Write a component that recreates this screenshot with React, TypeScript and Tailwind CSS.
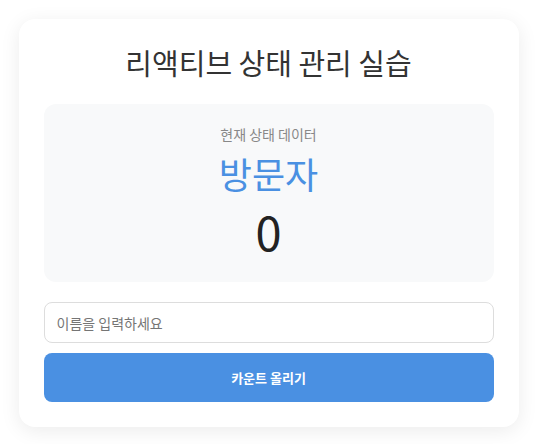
import React, { useState } from "react";

export default function App() {
  const [name, setName] = useState("");
  const [count, setCount] = useState(0);
  return (
    <div
      className="min-h-screen bg-white pt-[19px]"
      style={{ fontFamily: '"Noto Sans CJK KR", "Noto Sans", sans-serif' }}
    >
      <div className="mx-auto w-[500px] h-[408px] rounded-2xl bg-white p-[25px] shadow-[0_4px_20px_rgba(0,0,0,0.08)]">
        <h1 className="text-center text-[29px] leading-[36px] font-normal text-[#333]">
          리액티브 상태 관리 실습
        </h1>
        <div className="mt-6 rounded-xl bg-[#f8f9fa] pt-5 pb-[22px] text-center">
          <div className="text-[14px] leading-5 text-[#888]">현재 상태 데이터</div>
          <div className="mt-2 text-[36px] leading-[43px] text-[#4a90e2]">
            {name || "방문자"}
          </div>
          <div className="mt-[7px] text-[47px] leading-[58px] text-[#222]">{count}</div>
        </div>
        <input
          className="mt-5 block h-[41px] w-full rounded-lg border border-[#ddd] px-3 text-[14px] text-[#333] outline-none placeholder:text-[#757575]"
          placeholder="이름을 입력하세요"
          value={name}
          onChange={(e) => setName(e.target.value)}
        />
        <button
          className="mt-[10px] block h-[49px] w-full rounded-lg bg-[#4a90e2] text-[13px] font-bold text-white"
          onClick={() => setCount(count + 1)}
        >
          카운트 올리기
        </button>
      </div>
    </div>
  );
}
